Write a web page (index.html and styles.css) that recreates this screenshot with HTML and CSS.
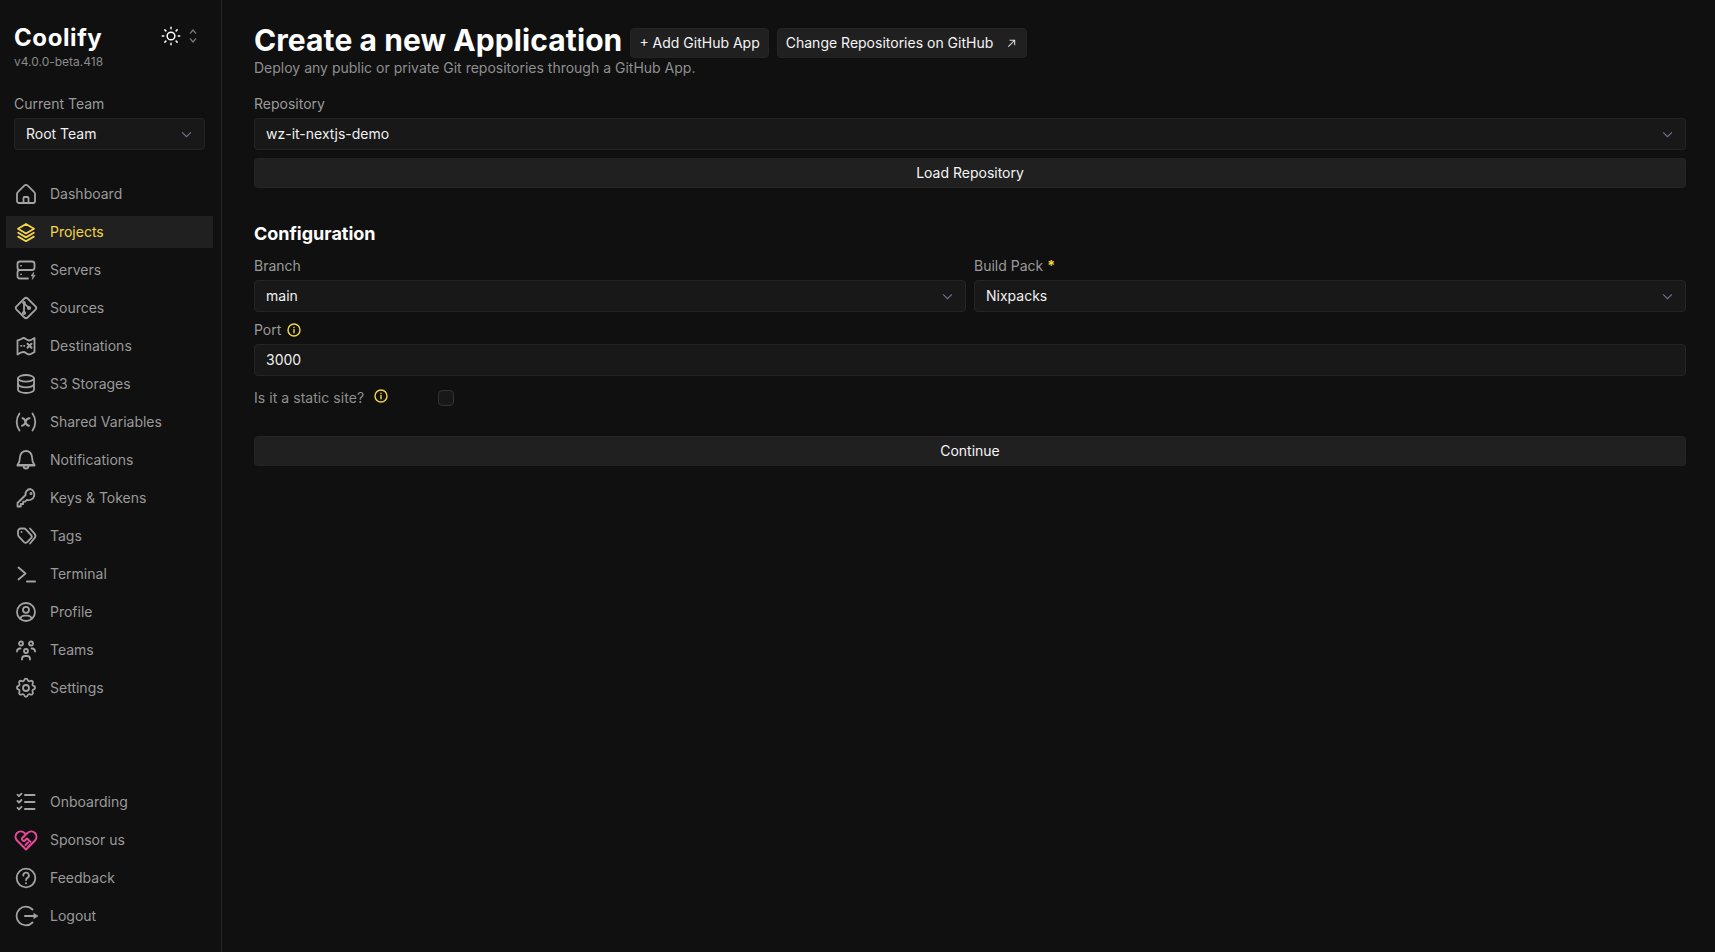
FILE: index.html
```html
<!DOCTYPE html>
<html lang="en">
<head>
<meta charset="utf-8">
<title>Create a new Application | Coolify</title>
<link rel="stylesheet" href="styles.css">
</head>
<body>
<aside class="sidebar">
  <div class="brand">
    <div class="brand-text">
      <div class="logo">Coolify</div>
      <div class="version">v4.0.0-beta.418</div>
    </div>
    <div class="theme">
      <svg class="sun" viewBox="0 0 24 24"><circle cx="12" cy="12" r="4.2"/><path d="M12 2.5v1.6M12 19.9v1.6M2.5 12h1.6M19.9 12h1.6M5.3 5.3l1.1 1.1M17.6 17.6l1.1 1.1M5.3 18.7l1.1-1.1M17.6 6.4l1.1-1.1"/></svg>
      <svg class="updown" viewBox="0 0 10 16"><path d="M2 5.500 5 2l3 3.500M2 10.500 5 14l3-3.500"/></svg>
    </div>
  </div>
  <div class="team">
    <div class="label">Current Team</div>
    <div class="select">Root Team<svg class="chev" viewBox="0 0 12 8"><path d="M1 1.500 6 6.500l5-5"/></svg></div>
  </div>
  <nav class="menu">
    <a class="item"><svg viewBox="0 0 24 24"><path d="M4 9.800 10.300 3.700a2.500 2.500 0 0 1 3.400 0L20 9.800A3 3 0 0 1 21 12v7a2 2 0 0 1-2 2H5a2 2 0 0 1-2-2v-7a3 3 0 0 1 1-2.200z"/><path d="M9.500 21v-5a1 1 0 0 1 1-1h3a1 1 0 0 1 1 1v5"/></svg>Dashboard</a>
    <a class="item active"><svg viewBox="0 0 24 24"><path d="M12 4 20 8.800l-8 4.700-8-4.700z"/><path d="M4.200 12.800 12 17.400l7.800-4.600"/><path d="M4.200 16.600 12 21.200l7.800-4.600"/></svg>Projects</a>
    <a class="item"><svg viewBox="0 0 24 24"><path d="M12 12H6a2.500 2.500 0 0 1-2.500-2.500V6A2.500 2.500 0 0 1 6 3.500h12A2.500 2.500 0 0 1 20.500 6v3.500A2.500 2.500 0 0 1 18 12h-6zm0 0H6a2.500 2.500 0 0 0-2.500 2.500V18A2.500 2.500 0 0 0 6 20.500h8"/><path d="M7 7.700h.01M7 16.300h.01"/><path class="filled" d="M19.500 14.500 17 18h2l-.8 3.500 3-4.300h-2.100l.6-2.700z"/></svg>Servers</a>
    <a class="item"><svg viewBox="0 0 24 24"><path d="m2.500 10.400 7.900-7.900a2.300 2.300 0 0 1 3.200 0l7.900 7.900a2.300 2.300 0 0 1 0 3.200l-7.900 7.900a2.300 2.300 0 0 1-3.200 0l-7.900-7.900a2.300 2.300 0 0 1 0-3.200z"/><circle cx="10" cy="6.800" r=".9"/><circle cx="15" cy="12" r="1.200"/><circle cx="10" cy="17" r="1.200"/><path d="M10 8v8M10.500 7.800l3.700 3.300"/></svg>Sources</a>
    <a class="item"><svg viewBox="0 0 24 24"><path d="M3.500 6.500c3-.6 5-2.500 6-2.500 2 0 3.500 2.500 5.500 2.500 1.500 0 3.500-1.200 5.500-2.500v14c-1.500 1-3.500 2.500-5.500 2.500S11.500 18 9.500 18c-2 0-4 1-6 2.500z"/><path d="M7 11.800h.5M10 11.800h.5"/><path class="thick" d="m13.500 9.800 4 4M17.500 9.800l-4 4"/></svg>Destinations</a>
    <a class="item"><svg viewBox="0 0 24 24"><ellipse cx="12" cy="6.300" rx="8" ry="3.300"/><path d="M4 6.300v11.400c0 1.800 3.600 3.300 8 3.300s8-1.500 8-3.300V6.300"/><path d="M4 12c0 1.800 3.600 3.300 8 3.300s8-1.500 8-3.300"/></svg>S3 Storages</a>
    <a class="item"><svg viewBox="0 0 24 24"><path d="M5.500 3.500C1.800 8.500 1.800 15.500 5.500 20.500M18.500 3.500c3.700 5 3.700 12 0 17"/><path class="thick" d="M8.500 8.300c2 0 2.200 1.300 3 3.700s1 3.700 3.500 3.700M15.500 8.300c-1.800 0-3.300 1.500-4 3.700s-2 3.700-3.500 3.700"/></svg>Shared Variables</a>
    <a class="item"><svg viewBox="0 0 24 24"><path d="M12 3a6 6 0 0 1 6 6c0 3.500.9 6 2.500 8h-17C5.100 15 6 12.500 6 9a6 6 0 0 1 6-6z"/><path d="M3.500 17.500h17M9.500 18a2.500 2.500 0 0 0 5 0"/></svg>Notifications</a>
    <a class="item"><svg viewBox="0 0 24 24"><path d="M16.500 3a5 5 0 0 0-4.900 6L3.500 17v3.500h3.300V18h2.400v-2.400h2l1.700-1.800A5 5 0 1 0 16.500 3z"/><circle cx="17" cy="7.500" r=".6"/></svg>Keys &amp; Tokens</a>
    <a class="item"><svg viewBox="0 0 24 24"><path d="M4 7.300A2.800 2.800 0 0 1 6.800 4.500h3.100c.8 0 1.500.3 2 .9l5.200 5.700a2.300 2.300 0 0 1 0 3.100l-3.900 3.900a2.300 2.300 0 0 1-3.200 0l-5.100-5.400A3 3 0 0 1 4 10.600z"/><path d="M7.500 8h.01"/><path d="m16 4.500 4.500 5.100a3.500 3.500 0 0 1 0 4.600L16 19.500"/></svg>Tags</a>
    <a class="item"><svg viewBox="0 0 24 24"><path d="m4.500 5.500 7 6-7 6"/><path class="thick" d="M13 19.500h8"/></svg>Terminal</a>
    <a class="item"><svg viewBox="0 0 24 24"><circle cx="12" cy="12" r="9"/><circle cx="12" cy="9.800" r="3"/><path d="M6.300 18.700a4.500 4.500 0 0 1 4.200-3h3a4.500 4.500 0 0 1 4.200 3"/></svg>Profile</a>
    <a class="item"><svg viewBox="0 0 24 24"><circle cx="7" cy="5.500" r="2"/><circle cx="17" cy="5.500" r="2"/><circle cx="12" cy="13" r="2"/><path d="M3 13.500a3 3 0 0 1 2.500-3h1M21 13.500a3 3 0 0 0-2.500-3h-1M8 21.500v-1a3 3 0 0 1 3-2.500h2a3 3 0 0 1 3 2.500v1"/></svg>Teams</a>
    <a class="item"><svg viewBox="0 0 24 24"><path d="M10.300 3.900c.4-1.800 3-1.800 3.400 0a1.700 1.700 0 0 0 2.600 1.100c1.500-.9 3.300.8 2.400 2.400a1.700 1.700 0 0 0 1 2.600c1.800.4 1.800 3 0 3.400a1.700 1.700 0 0 0-1 2.600c.9 1.500-.9 3.300-2.400 2.400a1.700 1.700 0 0 0-2.600 1c-.4 1.800-3 1.800-3.400 0a1.700 1.700 0 0 0-2.600-1c-1.500.9-3.300-.9-2.400-2.400a1.700 1.700 0 0 0-1-2.600c-1.800-.4-1.800-3 0-3.400a1.700 1.700 0 0 0 1-2.600c-.9-1.600.9-3.300 2.400-2.400a1.700 1.700 0 0 0 2.600-1.100z"/><circle cx="12" cy="12" r="3"/></svg>Settings</a>
  </nav>
  <nav class="menu bottom">
    <a class="item"><svg viewBox="0 0 24 24"><path d="m3.500 4.700 1.500 1.500 2.500-2.500M3.500 11l1.500 1.500L7.500 10M3.500 17.800l1.500 1.500 2.500-2.500"/><path class="thick" d="M11 5h9.500M11 12h9.500M11 19h9.500"/></svg>Onboarding</a>
    <a class="item pink"><svg viewBox="0 0 24 24"><path class="thick" d="M12 21.500 3 12.500a5.600 5.600 0 0 1 0-7.500 5.500 5.500 0 0 1 7.500 0L12 6.200 13.500 5a5.500 5.500 0 0 1 7.500 0 5.600 5.600 0 0 1 0 7.500z"/><path class="thick" d="M12 6.200 8.500 9.700a1.800 1.800 0 0 0 0 2.500c.9.800 2 .8 2.800 0l1.700-1.700 3.500 3.400M11.500 17l2.500-2.500M14 19l2.500-2.500"/></svg>Sponsor us</a>
    <a class="item"><svg viewBox="0 0 24 24"><circle cx="12" cy="12" r="9.300"/><path d="M9.300 9.500a2.800 2.800 0 1 1 4.200 2.400c-1 .6-1.500 1.200-1.500 2.300"/><path class="thick" d="M12 17.300v.01"/></svg>Feedback</a>
    <a class="item"><svg viewBox="0 0 24 24"><path d="M18.500 5.500A9.300 9.300 0 1 0 18.500 18.500"/><path class="thick" d="M11 12h10"/><path class="filled" d="M20 9.500 24 12l-4 2.500z"/></svg>Logout</a>
  </nav>
</aside>
<main class="content">
  <div class="title-row">
    <h1>Create a new Application</h1>
    <a class="btn">+ Add GitHub App</a>
    <a class="btn">Change Repositories on GitHub<svg class="ext" viewBox="0 0 12 12"><path d="M2.500 9.500 9.500 2.500M4 2.500h5.500V8"/></svg></a>
  </div>
  <p class="subtitle">Deploy any public or private Git repositories through a GitHub App.</p>

  <div class="field first">
    <div class="label">Repository</div>
    <div class="select">wz-it-nextjs-demo<svg class="chev" viewBox="0 0 12 8"><path d="M1 1.500 6 6.500l5-5"/></svg></div>
  </div>
  <a class="btn wide load">Load Repository</a>

  <h2>Configuration</h2>
  <div class="two">
    <div class="field">
      <div class="label">Branch</div>
      <div class="select">main<svg class="chev" viewBox="0 0 12 8"><path d="M1 1.500 6 6.500l5-5"/></svg></div>
    </div>
    <div class="field">
      <div class="label">Build Pack<span class="req">*</span></div>
      <div class="select">Nixpacks<svg class="chev" viewBox="0 0 12 8"><path d="M1 1.500 6 6.500l5-5"/></svg></div>
    </div>
  </div>
  <div class="field port">
    <div class="label">Port<svg class="info" viewBox="0 0 14 14"><circle cx="7" cy="7" r="6"/><path d="M7 6.500v3.200M7 4.200v.4"/></svg></div>
    <div class="select">3000</div>
  </div>
  <div class="static">
    <span class="static-label">Is it a static site?<svg class="info up" viewBox="0 0 14 14"><circle cx="7" cy="7" r="6"/><path d="M7 6.500v3.200M7 4.200v.4"/></svg></span>
    <span class="checkbox"></span>
  </div>
  <a class="btn wide">Continue</a>
</main>
</body>
</html>
```
FILE: styles.css
```css
* { box-sizing: border-box; }
html, body { height: 100%; }
body {
  margin: 0;
  display: flex;
  height: 952px;
  overflow: hidden;
  background: #101010;
  color: #fff;
  font-family: Inter, "Liberation Sans", sans-serif;
  font-size: 14px;
  line-height: 20px;
}
.sidebar {
  width: 222px;
  flex: none;
  display: flex;
  flex-direction: column;
  border-right: 1px solid #242424;
  padding-bottom: 20px;
}
.brand {
  display: flex;
  justify-content: space-between;
  padding: 22px 23px 0 14px;
}
.logo { font-size: 24px; line-height: 32px; font-weight: 700; letter-spacing: .6px; }
.version { font-size: 12px; line-height: 16px; color: #8a8a8a; }
.theme { display: flex; align-items: flex-start; gap: 6px; padding-top: 3px; }
.sun { width: 22px; height: 22px; fill: none; stroke: #fff; stroke-width: 1.6; stroke-linecap: round; }
.updown { width: 10px; height: 16px; margin-top: 3px; fill: none; stroke: #777; stroke-width: 1.2; }
.team { padding: 24px 16px 0 14px; }
.label {
  display: flex;
  align-items: center;
  gap: 4px;
  height: 20px;
  margin-bottom: 4px;
  color: #9a9a9a;
}
.select {
  display: flex;
  align-items: center;
  justify-content: space-between;
  height: 32px;
  padding: 0 12px 0 11px;
  background: #181818;
  border: 1px solid #242424;
  border-radius: 4px;
  color: #f0f0f0;
}
.chev { width: 11px; height: 7px; fill: none; stroke: #6b7280; stroke-width: 1.4; }
.menu {
  display: flex;
  flex-direction: column;
  gap: 6px;
  margin-top: 28px;
  padding-left: 6px;
  width: 213px;
}
.menu.bottom { margin-top: auto; }
.item {
  display: flex;
  align-items: center;
  gap: 12px;
  height: 32px;
  padding-left: 8px;
  color: #9a9a9a;
}
.item svg {
  width: 24px;
  height: 24px;
  flex: none;
  fill: none;
  stroke: #a3a3a3;
  stroke-width: 1.8;
  stroke-linecap: round;
  stroke-linejoin: round;
}
.item svg .thick { stroke-width: 2; }
.item svg .filled { fill: #a3a3a3; stroke-width: .6; }
.item.active { background: #202020; color: #f5d64a; }
.item.active svg { stroke: #f5d64a; }
.item.pink svg { stroke: #ec4899; }
.content {
  flex: 1;
  min-width: 0;
  padding: 22px 29px 0 32px;
}
.title-row { display: flex; align-items: flex-end; gap: 8px; height: 36px; }
h1 { margin: 0; font-size: 30px; line-height: 36px; font-weight: 700; letter-spacing: .09px; }
.btn {
  display: flex;
  align-items: center;
  justify-content: center;
  height: 30px;
  padding: 0 8px;
  background: #202020;
  border: 1px solid #242424;
  border-radius: 4px;
  color: #f5f5f5;
  white-space: nowrap;
}
.ext { width: 11px; height: 11px; margin-left: 13px; margin-right: 1px; fill: none; stroke: #ddd; stroke-width: 1.1; }
.subtitle { margin: 0; color: #8f8f8f; height: 20px; }
.field { display: flex; flex-direction: column; flex: 1; min-width: 0; }
.first { margin-top: 16px; }
.load { margin-top: 8px; }
h2 { margin: 32px 0 8px; font-size: 18px; line-height: 28px; font-weight: 700; }
.two { display: flex; gap: 8px; }
.port { margin-top: 8px; }
.port .label { gap: 6px; }
.info { width: 14px; height: 14px; flex: none; fill: none; stroke: #f5d64a; stroke-width: 1.4; stroke-linecap: round; }
.static { display: flex; align-items: center; height: 20px; margin: 12px 0 28px; }
.static-label { display: flex; width: 184px; color: #8f8f8f; align-items: center; gap: 10px; letter-spacing: .05px; }
.info.up { position: relative; top: -2px; }
.checkbox {
  width: 16px;
  height: 16px;
  background: #181818;
  border: 1px solid #333;
  border-radius: 4px;
}
.req { color: #f5d64a; font-weight: 700; }
```
